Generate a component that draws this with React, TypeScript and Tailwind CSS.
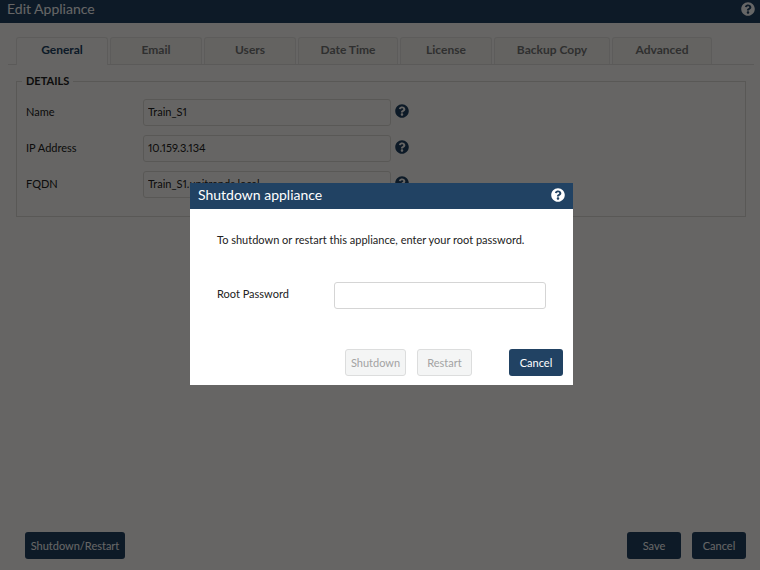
import { FaQuestionCircle } from "react-icons/fa";

const tabs = [
  { label: "General", width: "w-[92px]" },
  { label: "Email", width: "w-[92px]" },
  { label: "Users", width: "w-[92px]" },
  { label: "Date Time", width: "w-[100px]" },
  { label: "License", width: "w-[92px]" },
  { label: "Backup Copy", width: "w-[116px]" },
  { label: "Advanced", width: "w-[100px]" },
];

const fields = [
  { id: "name", label: "Name", value: "Train_S1" },
  { id: "ip", label: "IP Address", value: "10.159.3.134" },
  { id: "fqdn", label: "FQDN", value: "Train_S1.unitrends.local" },
];

const primary = "h-[27px] rounded-[3px] bg-[#214263] text-center text-white";
const disabled =
  "h-[27px] rounded-[3px] border border-[#dcdddd] bg-[#f4f5f5] text-center text-[#a3a3a3]";

function Help({ className }: { className: string }) {
  return (
    <button type="button" aria-label="Help" className={className}>
      <FaQuestionCircle size={14} />
    </button>
  );
}

export default function App() {
  return (
    <div className="flex min-h-screen flex-col bg-[#fffdf9] font-['Lato',sans-serif] text-[11px] leading-4 text-[#222] proportional-nums">
      <header className="flex h-[23px] items-start justify-between bg-[#214263] pr-[5px] pl-[7px] text-white">
        <h1 className="text-[14px] leading-[18px]">Edit Appliance</h1>
        <Help className="mt-0.5 text-white" />
      </header>

      <main className="flex-1 pt-[14px] pr-[6px] pl-2">
        <nav role="tablist" className="flex gap-0.5 border-b border-[#e4e2df] pl-2">
          {tabs.map((tab, i) => (
            <button
              key={tab.label}
              type="button"
              role="tab"
              aria-selected={i === 0}
              className={`rounded-t-[3px] border border-b-0 border-[#e9e7e4] text-center text-[12px] font-bold ${tab.width} ${
                i === 0
                  ? "-mb-px h-7 bg-[#fffdf9] pb-1 text-[#214263]"
                  : "h-[27px] bg-[#f9f7f3] pb-0.5 text-[#777]"
              }`}
            >
              {tab.label}
            </button>
          ))}
        </nav>

        <fieldset className="mt-2 mr-2 ml-2 border border-[#dedcd8] px-[9px] pb-[18px]">
          <legend className="-ml-1 px-1">
            <span className="font-bold">DETAILS</span>
          </legend>
          <div className="flex flex-col gap-[9px] pt-[10px]">
            {fields.map((f) => (
              <div key={f.id} className="flex items-center">
                <label htmlFor={f.id} className="w-[117px] pb-0.5">
                  {f.label}
                </label>
                <input
                  id={f.id}
                  defaultValue={f.value}
                  className="h-[27px] w-[248px] rounded-[3px] border border-[#dedcd8] bg-transparent px-1 pb-0.5"
                />
                <Help className="ml-1 pb-1 text-[#214263]" />
              </div>
            ))}
          </div>
        </fieldset>
      </main>

      <footer className="flex items-center gap-[11px] pr-[14px] pb-[11px] pl-[25px]">
        <button type="button" className={`${primary} mr-auto w-[100px]`}>
          Shutdown/Restart
        </button>
        <button type="button" className={`${primary} w-[54px]`}>
          Save
        </button>
        <button type="button" className={`${primary} w-[54px]`}>
          Cancel
        </button>
      </footer>

      <div className="fixed inset-0 flex items-center justify-center bg-black/60 pb-0.5 pl-[3px]">
        <form
          role="dialog"
          aria-labelledby="dialog-title"
          className="w-[383px] bg-white"
          onSubmit={(e) => e.preventDefault()}
        >
          <div className="flex h-[26px] items-center justify-between bg-[#214263] px-2 pb-0.5 text-white">
            <h2 id="dialog-title" className="text-[14px] leading-[18px]">
              Shutdown appliance
            </h2>
            <Help className="text-white" />
          </div>
          <div className="px-[27px] pt-[23px] pb-10">
            <p>To shutdown or restart this appliance, enter your root password.</p>
            <div className="mt-[34px] flex items-center justify-between">
              <label htmlFor="password" className="pb-1">
                Root Password
              </label>
              <input
                id="password"
                type="password"
                className="h-[27px] w-[212px] rounded-[3px] border border-[#d5d5d5] bg-white px-1"
              />
            </div>
          </div>
          <div className="flex justify-end gap-[11px] pr-[10px] pb-[9px]">
            <button type="button" disabled className={`${disabled} w-[61px]`}>
              Shutdown
            </button>
            <button type="button" disabled className={`${disabled} w-[55px]`}>
              Restart
            </button>
            <button type="button" className={`${primary} ml-[26px] w-[54px]`}>
              Cancel
            </button>
          </div>
        </form>
      </div>
    </div>
  );
}
